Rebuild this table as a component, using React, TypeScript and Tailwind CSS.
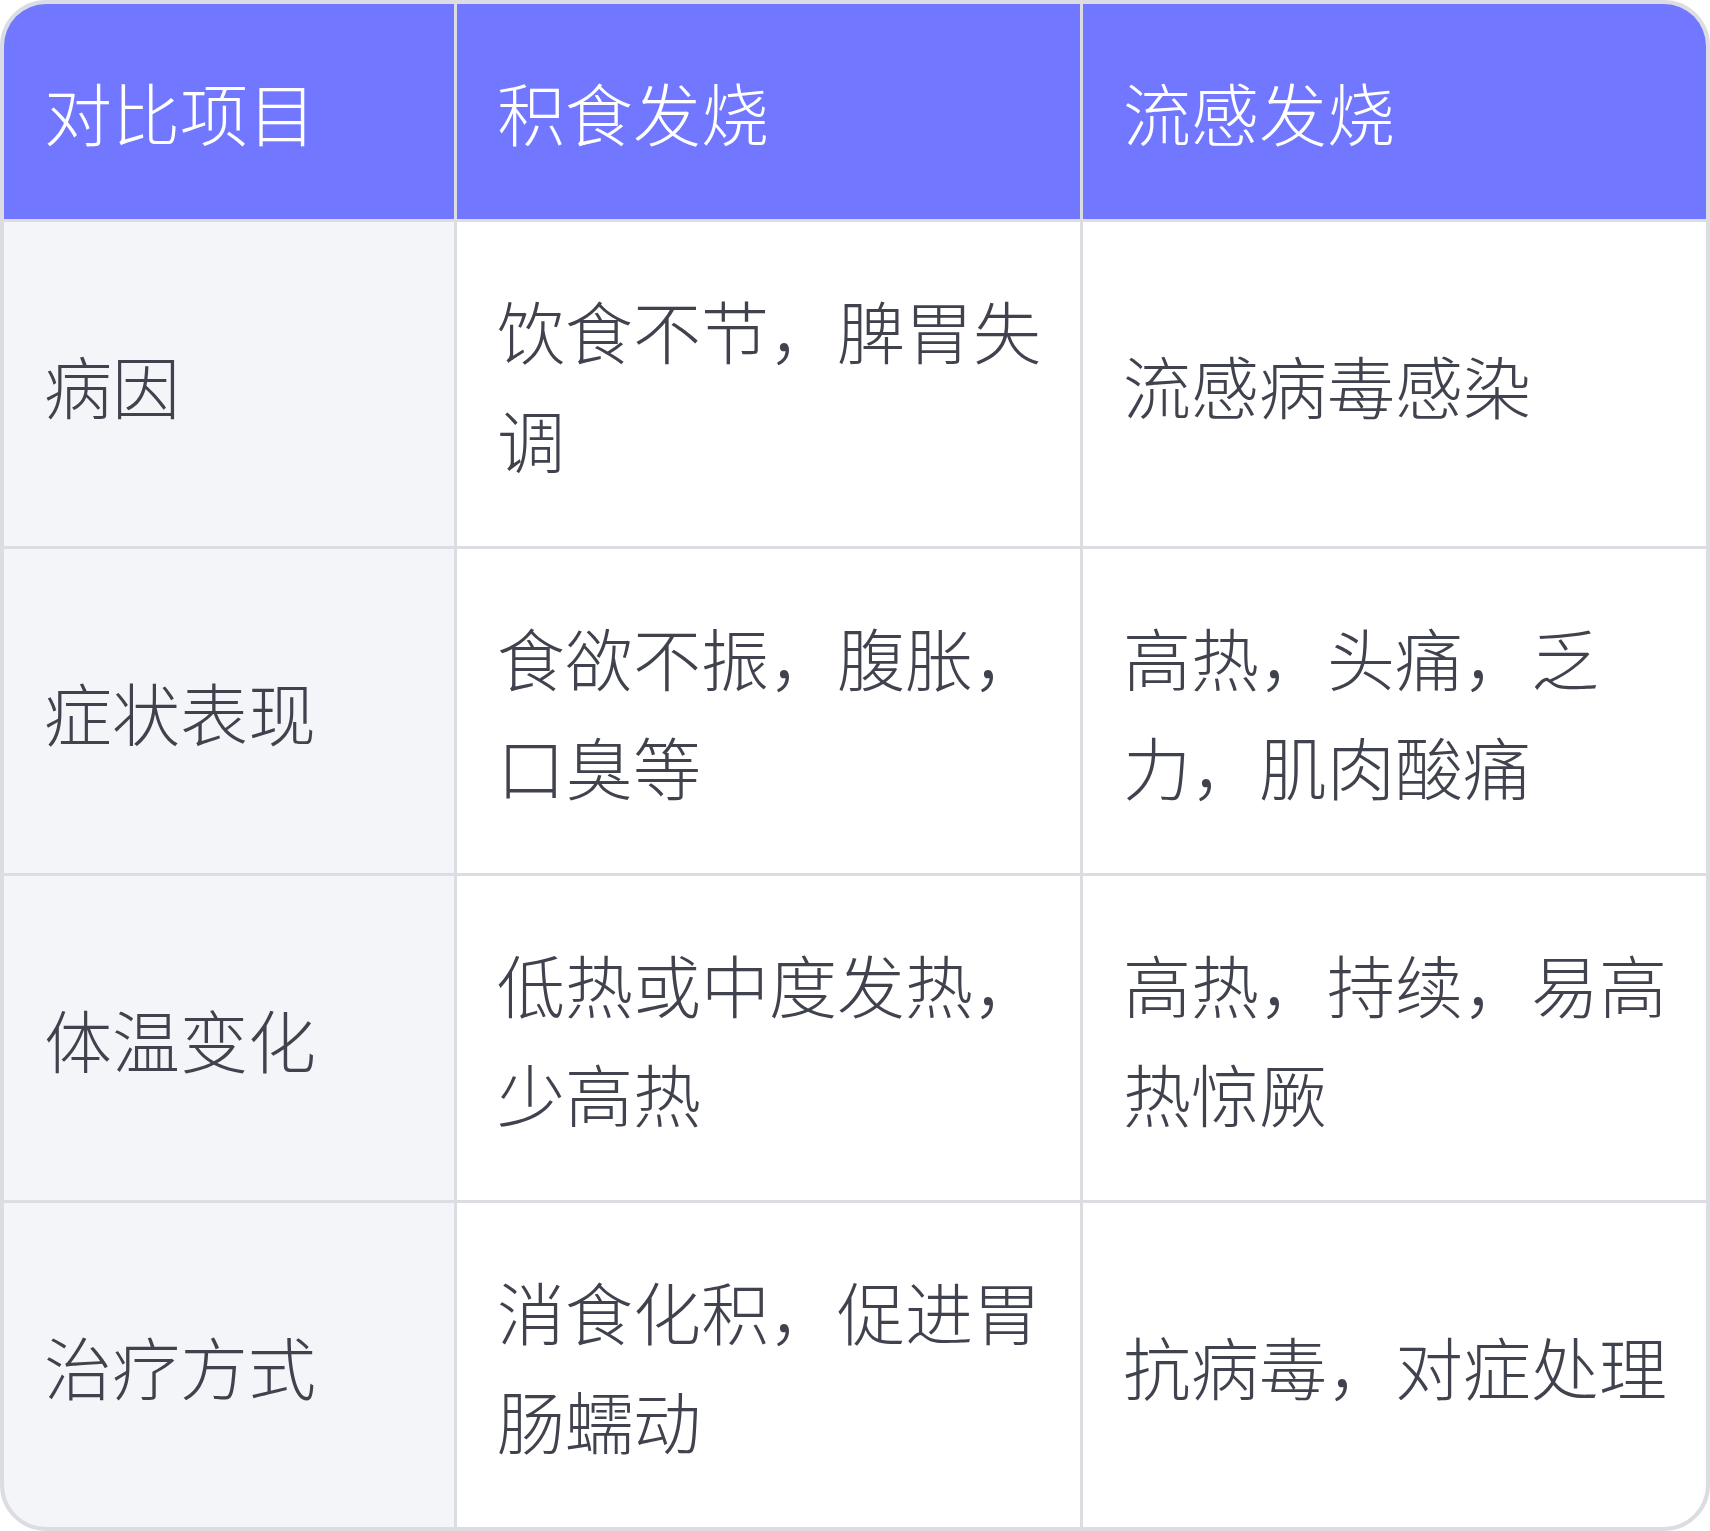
const headers = ["对比项目", "积食发烧", "流感发烧"];

const rows = [
  ["病因", "饮食不节，脾胃失调", "流感病毒感染"],
  ["症状表现", "食欲不振，腹胀，口臭等", "高热，头痛，乏力，肌肉酸痛"],
  ["体温变化", "低热或中度发热，少高热", "高热，持续，易高热惊厥"],
  ["治疗方式", "消食化积，促进胃肠蠕动", "抗病毒，对症处理"],
];

export default function App() {
  return (
    <div className="w-[1710px] h-[1531px] bg-white">
      <div
        className="w-[1710px] h-[1531px] overflow-hidden rounded-[46px] border-4 border-[#dcdde3] bg-[#dcdde3] grid grid-cols-[450px_623px_1fr] gap-[3px] text-[68px] leading-[109px] font-light text-[#40434e]"
        style={{ fontFamily: '"Noto Sans CJK SC", "Noto Sans", sans-serif' }}
      >
        {headers.map((h) => (
          <div key={h} className="bg-[#7177ff] pl-10 pr-[30px] py-[53px] text-white">
            {h}
          </div>
        ))}
        {rows.map((row) =>
          row.map((cell, i) => (
            <div
              key={row[0] + i}
              className={`flex items-center pl-10 pr-[30px] py-[53px] ${i === 0 ? "bg-[#f4f5f9]" : "bg-white"}`}
            >
              <span>{cell}</span>
            </div>
          )),
        )}
      </div>
    </div>
  );
}
